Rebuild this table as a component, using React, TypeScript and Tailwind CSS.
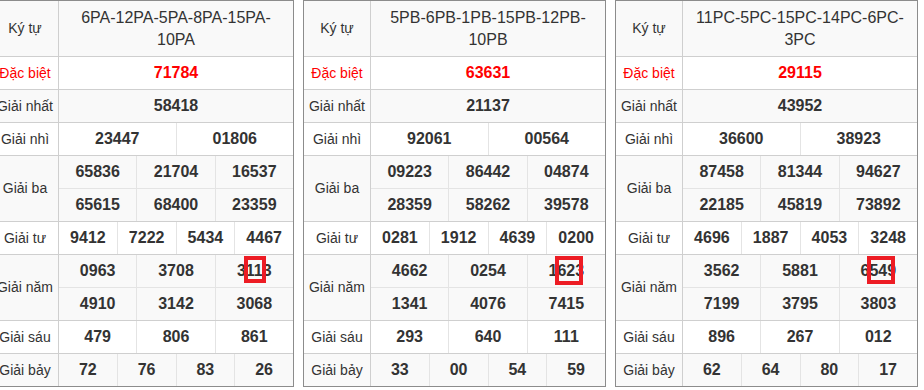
import React from "react";

type TableData = {
  code1: string;
  code2: string;
  db: string;
  g1: string;
  g2: string[];
  g3: string[][];
  g4: string[];
  g5: string[][];
  g6: string[];
  g7: string[];
  box: string;
};

const tables: TableData[] = [
  {
    code1: "6PA-12PA-5PA-8PA-15PA-",
    code2: "10PA",
    db: "71784",
    g1: "58418",
    g2: ["23447", "01806"],
    g3: [
      ["65836", "21704", "16537"],
      ["65615", "68400", "23359"],
    ],
    g4: ["9412", "7222", "5434", "4467"],
    g5: [
      ["0963", "3708", "3113"],
      ["4910", "3142", "3068"],
    ],
    g6: ["479", "806", "861"],
    g7: ["72", "76", "83", "26"],
    box: "left-[253px] top-[256px] w-[22px] h-[27px]",
  },
  {
    code1: "5PB-6PB-1PB-15PB-12PB-",
    code2: "10PB",
    db: "63631",
    g1: "21137",
    g2: ["92061", "00564"],
    g3: [
      ["09223", "86442", "04874"],
      ["28359", "58262", "39578"],
    ],
    g4: ["0281", "1912", "4639", "0200"],
    g5: [
      ["4662", "0254", "1623"],
      ["1341", "4076", "7415"],
    ],
    g6: ["293", "640", "111"],
    g7: ["33", "00", "54", "59"],
    box: "left-[252px] top-[256px] w-[28px] h-[29px]",
  },
  {
    code1: "11PC-5PC-15PC-14PC-6PC-",
    code2: "3PC",
    db: "29115",
    g1: "43952",
    g2: ["36600", "38923"],
    g3: [
      ["87458", "81344", "94627"],
      ["22185", "45819", "73892"],
    ],
    g4: ["4696", "1887", "4053", "3248"],
    g5: [
      ["3562", "5881", "6549"],
      ["7199", "3795", "3803"],
    ],
    g6: ["896", "267", "012"],
    g7: ["62", "64", "80", "17"],
    box: "left-[252px] top-[256px] w-[28px] h-[28px]",
  },
];

function DataRow({
  shaded,
  label,
  red,
  lines,
}: {
  shaded: boolean;
  label: string;
  red?: boolean;
  lines: string[][];
}) {
  return (
    <div
      className={`flex border-t border-[#cfcfcf] ${
        shaded ? "bg-[#f9f9f9]" : "bg-white"
      }`}
    >
      <div
        className={`w-[67px] shrink-0 border-r border-[#cfcfcf] flex items-center justify-center text-[14px] whitespace-nowrap ${
          red ? "text-[#ff0000]" : "text-[#333]"
        }`}
      >
        {label}
      </div>
      <div className="flex-1 flex flex-col min-w-0">
        {lines.map((vals, i) => (
          <div
            key={i}
            className={
              i > 0
                ? "flex h-[33px] border-t border-[#e4e4e4]"
                : "flex h-[32px]"
            }
          >
            {vals.map((v, j) => (
              <div
                key={j}
                className={`flex-1 basis-0 flex items-center justify-center font-bold text-[16px] ${
                  red ? "text-[#ff0000]" : "text-[#333]"
                } ${j > 0 ? "border-l border-[#e4e4e4]" : ""}`}
              >
                {v}
              </div>
            ))}
          </div>
        ))}
      </div>
    </div>
  );
}

function ResultTable({ t }: { t: TableData }) {
  return (
    <div className="relative w-[303px] shrink-0">
      <div className="border border-[#8c8c8c] bg-white">
        <div className="flex h-[55px] bg-[#f9f9f9]">
          <div className="w-[67px] shrink-0 border-r border-[#cfcfcf] flex items-center justify-center text-[14px] text-[#333]">
            Ký tự
          </div>
          <div className="flex-1 flex items-center justify-center text-center text-[16px] leading-[22px] text-[#333]">
            <span>
              {t.code1}
              <br />
              {t.code2}
            </span>
          </div>
        </div>
        <DataRow shaded={false} red label="Đặc biệt" lines={[[t.db]]} />
        <DataRow shaded label="Giải nhất" lines={[[t.g1]]} />
        <DataRow shaded={false} label="Giải nhì" lines={[t.g2]} />
        <DataRow shaded label="Giải ba" lines={t.g3} />
        <DataRow shaded={false} label="Giải tư" lines={[t.g4]} />
        <DataRow shaded label="Giải năm" lines={t.g5} />
        <DataRow shaded={false} label="Giải sáu" lines={[t.g6]} />
        <DataRow shaded label="Giải bảy" lines={[t.g7]} />
      </div>
      <div
        className={`absolute ${t.box} border-[4px] border-[#ed1c24] pointer-events-none`}
      />
    </div>
  );
}

export default function App() {
  return (
    <div className="w-[924px] h-[390px] overflow-hidden bg-white font-['Liberation_Sans',Arial,sans-serif]">
      <div className="flex gap-[9px] ml-[-9px]">
        {tables.map((t, i) => (
          <ResultTable key={i} t={t} />
        ))}
      </div>
    </div>
  );
}
